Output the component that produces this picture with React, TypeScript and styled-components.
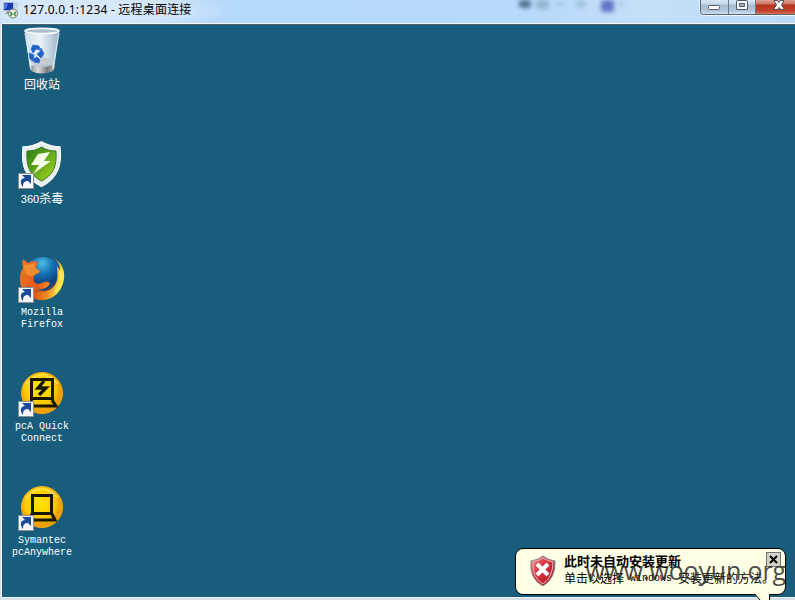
import React from 'react';
import styled, { createGlobalStyle } from 'styled-components';

const GlobalStyle = createGlobalStyle`
  * { box-sizing: border-box; }
  body { margin: 0; overflow: hidden; }
  svg { display: block; }
`;

const Window = styled.main`
  position: relative;
  display: flex;
  flex-direction: column;
  width: 795px;
  height: 600px;
  overflow: hidden;
  background: #d5e0ea;
  font-family: 'Liberation Sans', 'Noto Sans CJK SC', sans-serif;
`;

const TitleBar = styled.header`
  position: relative;
  display: flex;
  align-items: flex-start;
  height: 23px;
  flex-shrink: 0;
  padding-left: 3px;
  background: radial-gradient(ellipse 150px 24px at 85px 10px, #dbeafa 0%, #d2e6fa 60%, transparent 100%),
    linear-gradient(90deg, #c4def7 0%, #b4d7fc 30%, #b6d9fc 65%, #c4dff8 82%, #bdd9f6 100%);
`;

const AppIcon = styled.div`
  width: 16px;
  height: 18px;
  margin-top: 1px;
`;

const Title = styled.h1`
  margin: 1px 0 0 4px;
  font: 400 12px/17px 'Noto Sans', 'Noto Sans CJK SC', sans-serif;
  letter-spacing: 0.2px;
  white-space: pre;
  color: #000;
`;

const TitleAddress = styled.span`
  letter-spacing: 0.22px;
`;

const Controls = styled.div`
  display: flex;
  width: 95px;
  height: 15px;
  margin-left: auto;
  border: 1px solid #56657a;
  border-top: 0;
  border-right: 0;
  border-bottom-left-radius: 4px;
  box-shadow: 0 1px 0 #ecf7ff, -1px 0 0 #e3f0fc;
  overflow: hidden;
`;

const ControlButton = styled.button<{ $close?: boolean }>`
  display: flex;
  justify-content: center;
  align-items: flex-start;
  flex: ${({ $close }) => ($close ? '0 0 46px' : '0 0 27.5px')};
  padding: 0;
  border: 0;
  border-right: ${({ $close }) => ($close ? '0' : '1px solid #66778e')};
  background: ${({ $close }) =>
    $close
      ? 'linear-gradient(#dda197 0, #cf7666 4px, #b7321c 5px, #c5432b 11px, #d5735c 14px)'
      : 'linear-gradient(#d8e6f5 0, #c7d8ea 4px, #a9bbce 5px, #b4c6da 11px, #d0e1f2 14px)'};
`;

const Blur = styled.div<{ $x: number; $y: number; $w: number; $h: number; $color: string }>`
  position: absolute;
  left: ${({ $x }) => $x}px;
  top: ${({ $y }) => $y}px;
  width: ${({ $w }) => $w}px;
  height: ${({ $h }) => $h}px;
  border-radius: 3px;
  background: ${({ $color }) => $color};
  filter: blur(2.2px);
`;

const Desktop = styled.section`
  height: 573px;
  flex-shrink: 0;
  margin-left: 2px;
  margin-top: 1px;
  padding-top: 2px;
  border-top: 1px solid #53606a;
  background: #195d7c;
  box-shadow: 0 -1px 0 #f0f8ff, -1px 0 0 #f0f5fa, 0 1px 0 #f4f4f4;
`;

const Shortcuts = styled.nav`
  display: flex;
  flex-direction: column;
  width: 80px;
`;

const Shortcut = styled.div`
  display: flex;
  flex-direction: column;
  align-items: center;
  height: 114px;
`;

const IconFrame = styled.div`
  width: 48px;
  height: 49px;
`;

const Label = styled.span`
  margin-top: 3px;
  color: #fff;
  font: 10px/12px 'Liberation Mono', 'Noto Sans CJK SC', monospace;
  text-align: center;
  white-space: pre;
`;

const ChineseLabel = styled(Label)`
  margin-top: 2px;
  font: 12px/12px 'Noto Sans CJK SC', sans-serif;
`;

const Digits = styled.span`
  font: 11px/12px 'Liberation Sans', sans-serif;
`;

const Balloon = styled.aside`
  position: absolute;
  left: 515px;
  top: 548px;
  width: 271px;
  height: 47px;
  display: flex;
  border: 1px solid #000;
  border-radius: 8px;
  background: #ffffe5;
`;

const BalloonTail = styled.div`
  position: absolute;
  left: 238px;
  top: 44px;
  width: 18px;
  height: 9px;
`;

const ShieldFrame = styled.div`
  width: 28px;
  height: 32px;
  margin: 6px 0 0 13px;
`;

const BalloonText = styled.div`
  margin: 4px 0 0 7px;
  color: #000;
  white-space: pre;
`;

const Heading = styled.h2`
  margin: 0;
  font: 700 13px/15px 'Noto Sans CJK SC', sans-serif;
`;

const Message = styled.p`
  display: flex;
  margin: 1px 0 0;
  font: 12px/17px 'Noto Sans CJK SC', sans-serif;
`;

const Mono = styled.span`
  padding-top: 1px;
  font: 10px/17px 'Liberation Mono', monospace;
`;

const Dismiss = styled.button`
  position: absolute;
  right: 4px;
  top: 3px;
  width: 15px;
  height: 15px;
  padding: 0;
  border: 1px solid #747474;
  background: #d4d0c8;
`;

const Watermark = styled.div`
  position: absolute;
  right: 9px;
  top: 553px;
  color: rgba(35, 35, 35, 0.83);
  font: 25px/34px 'Open Sans', sans-serif;
  letter-spacing: -0.15px;
  white-space: nowrap;
`;

function ShortcutArrow() {
  return (
    <g>
      <path d="M.5 32.5h15v15H.5z" fill="#f4f6fa" stroke="#8b8f96" />
      <path d="M5 46C1 41 3 37 7 37l-3-3h9v9l-3-3c-4 0-5 2-5 6z" fill="#1a4b99" />
    </g>
  );
}

function RecycleBin() {
  return (
    <svg width="48" height="49" viewBox="0 0 48 49">
      <defs>
        <linearGradient id="bin"><stop stopColor="#cadfeb" /><stop offset=".45" stopColor="#edf3f9" /><stop offset="1" stopColor="#9bb4c9" /></linearGradient>
        <linearGradient id="base"><stop stopColor="#7a8287" /><stop offset=".35" stopColor="#e0dfdc" /><stop offset=".7" stopColor="#77787a" /><stop offset="1" stopColor="#b5b9bd" /></linearGradient>
      </defs>
      <path d="M7 4h34l-5 38c-3 5-21 5-24 0z" fill="url(#bin)" />
      <path d="M11 39q13-3 26 0l-2 5q-11 5-22 0z" fill="url(#base)" />
      <path d="M12 35q11-10 24 0-4 7-17 5z" fill="#bfc5cc" opacity=".8" />
      <ellipse cx="24" cy="4" rx="17" ry="2.6" fill="#a9becf" stroke="#f4f7fa" strokeWidth="1.6" />
      <path d="m7 6 6 36M41 6l-6 36" stroke="#f4fbff" strokeWidth="1.3" opacity=".75" />
      <path d="m13 22 2-4 6 1 1 4-4-1-3 4zm10-1 3 6-3 4-4-4 3-2zm-12 5 5 2-1 6-3-2zm4 6 4-2 3 3-1 3-5-1z" fill="#1c63c5" stroke="#3c75d1" strokeLinejoin="round" />
    </svg>
  );
}

function GreenShield() {
  return (
    <svg width="48" height="49" viewBox="0 0 48 49">
      <defs><linearGradient id="green" x2="1" y2="1"><stop stopColor="#297c18" /><stop offset=".52" stopColor="#65a916" /><stop offset="1" stopColor="#b2df29" /></linearGradient></defs>
      <path d="M23.5.8C29 4 36 6 42 6c2 18-2 31-18.5 39.5C7 37 3 24 5 6c6 0 13-2 18.5-5.2z" fill="#e9eff0" stroke="#fafdff" strokeWidth="1.3" />
      <path d="M23.5 6C28 9 33 10 38 10c1 16-3 24-14.5 30C12 34 8 26 9 10c5 0 10-1 14.5-4z" fill="url(#green)" stroke="#347c20" />
      <path d="m20 13 12-2-6 9h7L15 33l6-9h-8z" fill="#f6ffe9" />
      <ShortcutArrow />
    </svg>
  );
}

function Firefox() {
  return (
    <svg width="48" height="49" viewBox="0 0 48 49">
      <defs>
        <radialGradient id="globe" cx=".48" cy=".16"><stop stopColor="#4cbfe7" /><stop offset=".5" stopColor="#1775b9" /><stop offset="1" stopColor="#104582" /></radialGradient>
        <linearGradient id="fox" x2="1" y2=".2"><stop stopColor="#ee7824" /><stop offset=".5" stopColor="#e4571c" /><stop offset=".75" stopColor="#f18c1b" /><stop offset="1" stopColor="#fce455" /></linearGradient>
      </defs>
      <circle cx="25" cy="22" r="20" fill="url(#globe)" />
      <path d="M5 4l5 4c3-2 7-2 10-1l-2 6 4 4-6 4c-2 7 3 9 8 7 4-2 6-1 8 0-2 5-7 7-13 6 9 5 18 0 20-9 1-5 0-9 0-14l3 4c0-5-2-8-5-11 8 5 10 13 9 20-2 13-11 21-22 21C11 45 2 36 2 24c0-5 1-8 3-11-1-3-1-6 0-9z" fill="url(#fox)" />
      <path d="M6 10q7-1 12-2l-1 5 5 3c-2 3-6 3-7 5-6 1-9-3-9-11z" fill="#f08c30" />
      <path d="M10 31c7 8 19 8 26-2" stroke="#b83a18" strokeWidth="1.2" fill="none" opacity=".65" />
      <path d="M42 16q4 12-5 21" stroke="#ffe451" strokeWidth="3" fill="none" />
      <ShortcutArrow />
    </svg>
  );
}

function ConnectIcon({ quick = false }: { quick?: boolean }) {
  const gradient = quick ? 'quick-yellow' : 'yellow';
  return (
    <svg width="48" height="49" viewBox="0 0 48 49">
      <defs><radialGradient id={gradient} cx=".45" cy=".4"><stop stopColor="#ffe600" /><stop offset=".75" stopColor="#ffca00" /><stop offset="1" stopColor="#eea000" /></radialGradient></defs>
      <circle cx="24" cy="24" r="20.5" fill={`url(#${gradient})`} stroke="#f4a817" />
      <path d="M8 15Q24-3 40 15" fill="none" stroke="#fff1a4" strokeWidth="2" strokeDasharray="1 1" />
      {quick ? (
        <g fill="none" stroke="#171700">
          <path d="M13.5 10.5h21v19h-21zM14 31l-3 6h27l-4-6" strokeWidth="3" />
          <path d="m26 12-6 7h8l-7 7" strokeWidth="3.3" />
        </g>
      ) : (
        <path d="M14.5 12.5h19v18h-19zM14 31l-3 6h26l-3-6" fill="none" stroke="#171700" strokeWidth="3" />
      )}
      <ShortcutArrow />
    </svg>
  );
}

export default function App() {
  return (
    <>
      <GlobalStyle />
      <Window>
        <TitleBar>
          <AppIcon>
            <svg width="16" height="18" viewBox="0 0 16 18">
              <path d="M.5 1.5h10v8H.5z" fill="#1838bb" stroke="#b2bec8" />
              <path d="M12 2h2v8h-2z" fill="#e1e6eb" stroke="#a5b1bd" strokeWidth=".6" />
              <path d="m1 2 4 1-2 5H1z" fill="#4978dc" />
              <path d="M4 10h4v3H2z" fill="#91a1a9" />
              <circle cx="10" cy="12.5" r="4.5" fill="#e4ebe1" stroke="#72856e" />
              <path d="m7 11 2 2-2 2m6-4-2 2 2 2" fill="none" stroke="#318333" strokeWidth="1.3" />
            </svg>
          </AppIcon>
          <Title><TitleAddress>127.0.0.1:1234 - </TitleAddress>远程桌面连接</Title>
          <Blur $x={519} $y={0} $w={12} $h={8} $color="#557494" />
          <Blur $x={536} $y={0} $w={13} $h={9} $color="#94b4cf" />
          <Blur $x={556} $y={2} $w={7} $h={3} $color="#9abbd9" />
          <Blur $x={576} $y={0} $w={10} $h={8} $color="#a3c3de" />
          <Blur $x={601} $y={0} $w={13} $h={12} $color="#5f76c5" />
          <Blur $x={618} $y={2} $w={6} $h={3} $color="#a1bfde" />
          <Controls>
            <ControlButton aria-label="最小化">
              <svg width="14" height="14" viewBox="0 0 14 14"><rect x="1.5" y="5.5" width="11" height="4" rx="1" fill="#fff" stroke="#555b70" /></svg>
            </ControlButton>
            <ControlButton aria-label="还原">
              <svg width="14" height="14" viewBox="0 0 14 14"><path d="M2.5.5h9a1 1 0 0 1 1 1v8h-11v-8a1 1 0 0 1 1-1z" fill="#f6f8fb" stroke="#4d566a" /><path d="M4.5 3.5h5v3h-5z" fill="#a2b3c5" stroke="#4d566a" /></svg>
            </ControlButton>
            <ControlButton aria-label="关闭" $close>
              <svg width="14" height="14" viewBox="0 0 14 14"><path d="M2 .5h3.5L7 2.5l1.5-2H12L9.5 5l3 4.5h-4L7 7.5l-1.5 2h-4L4.5 5z" fill="#fff" stroke="#50505e" /></svg>
            </ControlButton>
          </Controls>
        </TitleBar>

        <Desktop>
          <Shortcuts>
            <Shortcut><IconFrame><RecycleBin /></IconFrame><ChineseLabel>回收站</ChineseLabel></Shortcut>
            <Shortcut><IconFrame><GreenShield /></IconFrame><ChineseLabel><Digits>360</Digits>杀毒</ChineseLabel></Shortcut>
            <Shortcut><IconFrame><Firefox /></IconFrame><Label>{'Mozilla\nFirefox'}</Label></Shortcut>
            <Shortcut><IconFrame><ConnectIcon quick /></IconFrame><Label>{'pcA Quick\nConnect'}</Label></Shortcut>
            <Shortcut><IconFrame><ConnectIcon /></IconFrame><Label>{'Symantec\npcAnywhere'}</Label></Shortcut>
          </Shortcuts>
        </Desktop>

        <Balloon>
          <BalloonTail>
            <svg width="18" height="9" viewBox="0 0 18 9"><path d="M1 1.5 8 9h8V1.5" fill="#ffffe5" /><path d="M1 1.5 8 9M15.5 1.5V9" fill="none" stroke="#000" /><path d="M2 1h13" stroke="#ffffe5" strokeWidth="2" /></svg>
          </BalloonTail>
          <ShieldFrame>
            <svg width="28" height="32" viewBox="0 0 28 32">
              <defs><linearGradient id="red" x2="1" y2="1"><stop stopColor="#ed9696" /><stop offset=".4" stopColor="#d93640" /><stop offset="1" stopColor="#a90f20" /></linearGradient></defs>
              <path d="M14 1q5 4 12 5 1 17-12 25Q0 24 2 6q7-1 12-5z" fill="url(#red)" stroke="#858b8f" />
              <path d="M14 3q5 3 10 4 0 15-10 22Q3 23 4 7q5-1 10-4z" fill="none" stroke="#e9b8b7" />
              <path d="m8 9 11 11M19 9 8 20" stroke="#fff" strokeWidth="4" />
            </svg>
          </ShieldFrame>
          <BalloonText>
            <Heading>此时未自动安装更新</Heading>
            <Message>单击以选择<Mono> Windows </Mono>安装更新的方法。</Message>
          </BalloonText>
          <Dismiss aria-label="关闭提示">
            <svg width="13" height="13" viewBox="0 0 13 13"><path d="m3 3 7 7m0-7-7 7" stroke="#000" strokeWidth="2" /></svg>
          </Dismiss>
        </Balloon>
        <Watermark>www.wooyun.org</Watermark>
      </Window>
    </>
  );
}
